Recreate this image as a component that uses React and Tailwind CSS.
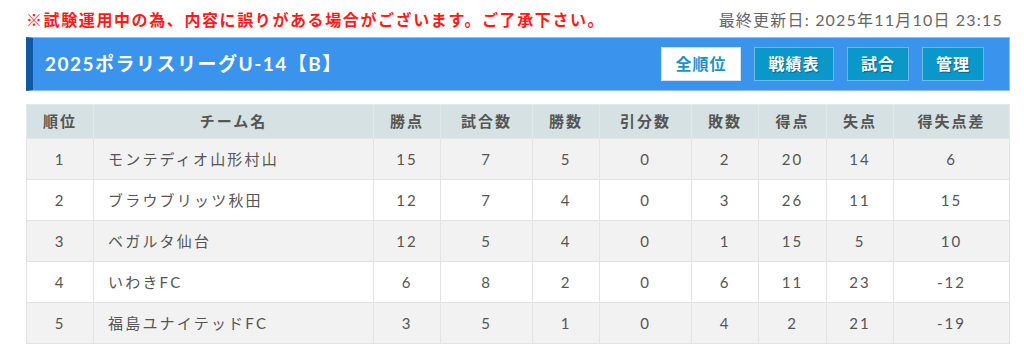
import React from "react";

const font = { fontFamily: 'Lato, "Noto Sans CJK JP", sans-serif' };

const cols = [
  { label: "順位", w: "w-[67px]" },
  { label: "チーム名", w: "w-[280px]" },
  { label: "勝点", w: "w-[67px]" },
  { label: "試合数", w: "w-[92px]" },
  { label: "勝数", w: "w-[67px]" },
  { label: "引分数", w: "w-[92px]" },
  { label: "敗数", w: "w-[67px]" },
  { label: "得点", w: "w-[68px]" },
  { label: "失点", w: "w-[67px]" },
  { label: "得失点差", w: "w-[116px]" },
];

const rows = [
  [1, "モンテディオ山形村山", 15, 7, 5, 0, 2, 20, 14, 6],
  [2, "ブラウブリッツ秋田", 12, 7, 4, 0, 3, 26, 11, 15],
  [3, "ベガルタ仙台", 12, 5, 4, 0, 1, 15, 5, 10],
  [4, "いわきFC", 6, 8, 2, 0, 6, 11, 23, -12],
  [5, "福島ユナイテッドFC", 3, 5, 1, 0, 4, 2, 21, -19],
];

const NavButton = ({ children, active, w }) => (
  <button
    className={
      active
        ? `${w} h-[34px] bg-white border border-[#cfe3f5] text-[#1a93cc] text-[16px] font-bold tracking-[1px]`
        : `${w} h-[34px] bg-[#0a98cb] border border-[#6cb8e8] text-white text-[16px] font-bold tracking-[1px] [text-shadow:1px_1px_1px_rgba(0,0,0,0.35)]`
    }
  >
    {children}
  </button>
);

export default function App() {
  return (
    <div className="bg-white w-[1024px] h-[351px] pl-[26px] pt-[8px]" style={font}>
      <div className="w-[984px]">
        <div className="flex items-center justify-between h-[24px] pr-[7px]">
          <div className="text-[16px] font-bold text-[#ff1a1a] tracking-[1.6px]">
            ※試験運用中の為、内容に誤りがある場合がございます。ご了承下さい。
          </div>
          <div className="text-[16px] text-[#666] tracking-[1.2px]">最終更新日: 2025年11月10日 23:15</div>
        </div>

        <div className="mt-[5px] h-[54px] flex items-center bg-[#3a93ec] border border-[#8cc0f2] border-l-[7px] border-l-[#13579f] pl-[12px] pr-[25px]">
          <div className="flex-1 text-white text-[19px] font-bold tracking-[1.5px]">2025ポラリスリーグU-14【B】</div>
          <div className="flex gap-[13px]">
            <NavButton active w="w-[80px]">全順位</NavButton>
            <NavButton w="w-[80px]">戦績表</NavButton>
            <NavButton w="w-[62px]">試合</NavButton>
            <NavButton w="w-[62px]">管理</NavButton>
          </div>
        </div>

        <table className="mt-[13px] w-[984px] border-collapse table-fixed text-[15px] text-[#555]">
          <thead>
            <tr className="bg-[#d5e1e2] h-[34px]">
              {cols.map((c) => (
                <th key={c.label} className={`${c.w} font-bold text-center border border-[#e2e8e8] p-0 tracking-[2px]`}>
                  {c.label}
                </th>
              ))}
            </tr>
          </thead>
          <tbody>
            {rows.map((r, i) => (
              <tr key={r[0]} className={i % 2 === 0 ? "bg-[#f2f2f2] h-[41px]" : "bg-white h-[41px]"}>
                {r.map((v, j) => (
                  <td
                    key={j}
                    className={
                      j === 1
                        ? "text-left pl-[14px] border border-[#e3e3e3] tracking-[2.2px]"
                        : "text-center border border-[#e3e3e3] tracking-[2px]"
                    }
                  >
                    {v}
                  </td>
                ))}
              </tr>
            ))}
          </tbody>
        </table>
      </div>
    </div>
  );
}
